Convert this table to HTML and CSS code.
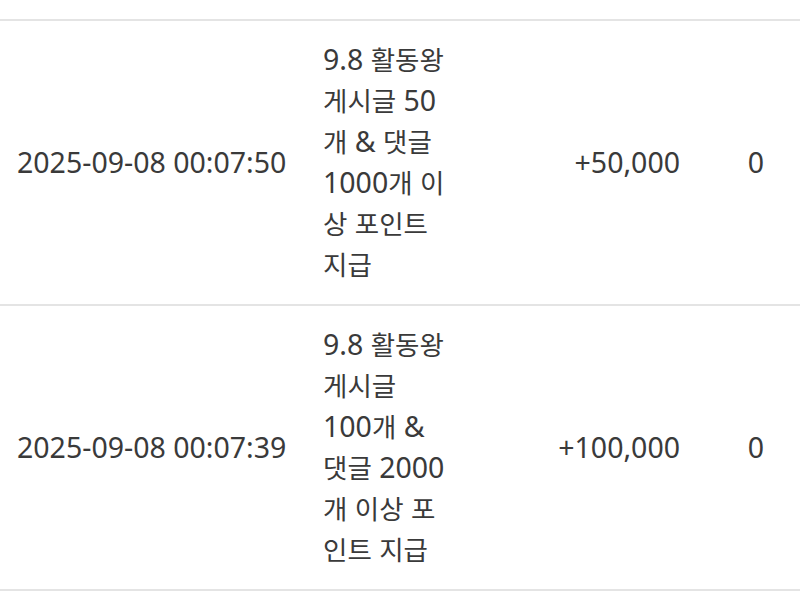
FILE: index.html
```html
<!DOCTYPE html>
<html lang="ko">
<head>
<meta charset="utf-8">
<link rel="stylesheet" href="styles.css">
</head>
<body>
<table class="points">
  <colgroup>
    <col class="c-date">
    <col class="c-desc">
    <col class="c-amt">
    <col class="c-bal">
  </colgroup>
  <tbody>
    <tr>
      <td class="date">2025-09-08 00:07:50</td>
      <td class="desc"><div class="desc-text">9.8 <span class="ko">활동왕</span> <span class="ko">게시글</span> 50<span class="ko">개</span> &amp; <span class="ko">댓글</span> 1000<span class="ko">개</span> <span class="ko">이상</span> <span class="ko">포인트</span> <span class="ko">지급</span></div></td>
      <td class="amt">+50,000</td>
      <td class="bal">0</td>
    </tr>
    <tr>
      <td class="date">2025-09-08 00:07:39</td>
      <td class="desc"><div class="desc-text">9.8 <span class="ko">활동왕</span> <span class="ko">게시글</span> 100<span class="ko">개</span> &amp; <span class="ko">댓글</span> 2000<span class="ko">개</span> <span class="ko">이상</span> <span class="ko">포인트</span> <span class="ko">지급</span></div></td>
      <td class="amt">+100,000</td>
      <td class="bal">0</td>
    </tr>
  </tbody>
</table>
</body>
</html>
```
FILE: styles.css
```css
html, body {
  margin: 0;
  padding: 0;
  background: #ffffff;
}
body {
  padding-top: 19px;
  font-family: "Noto Sans", "Noto Sans CJK KR", sans-serif;
  font-size: 28.5px;
  color: #3a3a3a;
}
.points {
  width: 800px;
  border-collapse: collapse;
  table-layout: fixed;
  border-top: 2px solid #e4e4e4;
}
.c-date { width: 305px; }
.c-desc { width: 160px; }
.c-amt { width: 247px; }
.c-bal { width: 88px; }
.points tr {
  border-bottom: 2px solid #e4e4e4;
}
.points td {
  padding: 18px 0 19px;
  line-height: 41px;
  vertical-align: middle;
  white-space: nowrap;
}
.date {
  padding-left: 17px !important;
}
.desc {
  padding-left: 18px !important;
}
.desc-text {
  width: 127px;
  white-space: normal;
  word-break: normal;
}
.ko {
  font-family: "Noto Sans CJK KR", sans-serif;
  font-size: 26.5px;
  line-height: 27px;
}
.amt {
  text-align: right;
  padding-right: 32px !important;
}
.bal {
  text-align: center;
}
```
